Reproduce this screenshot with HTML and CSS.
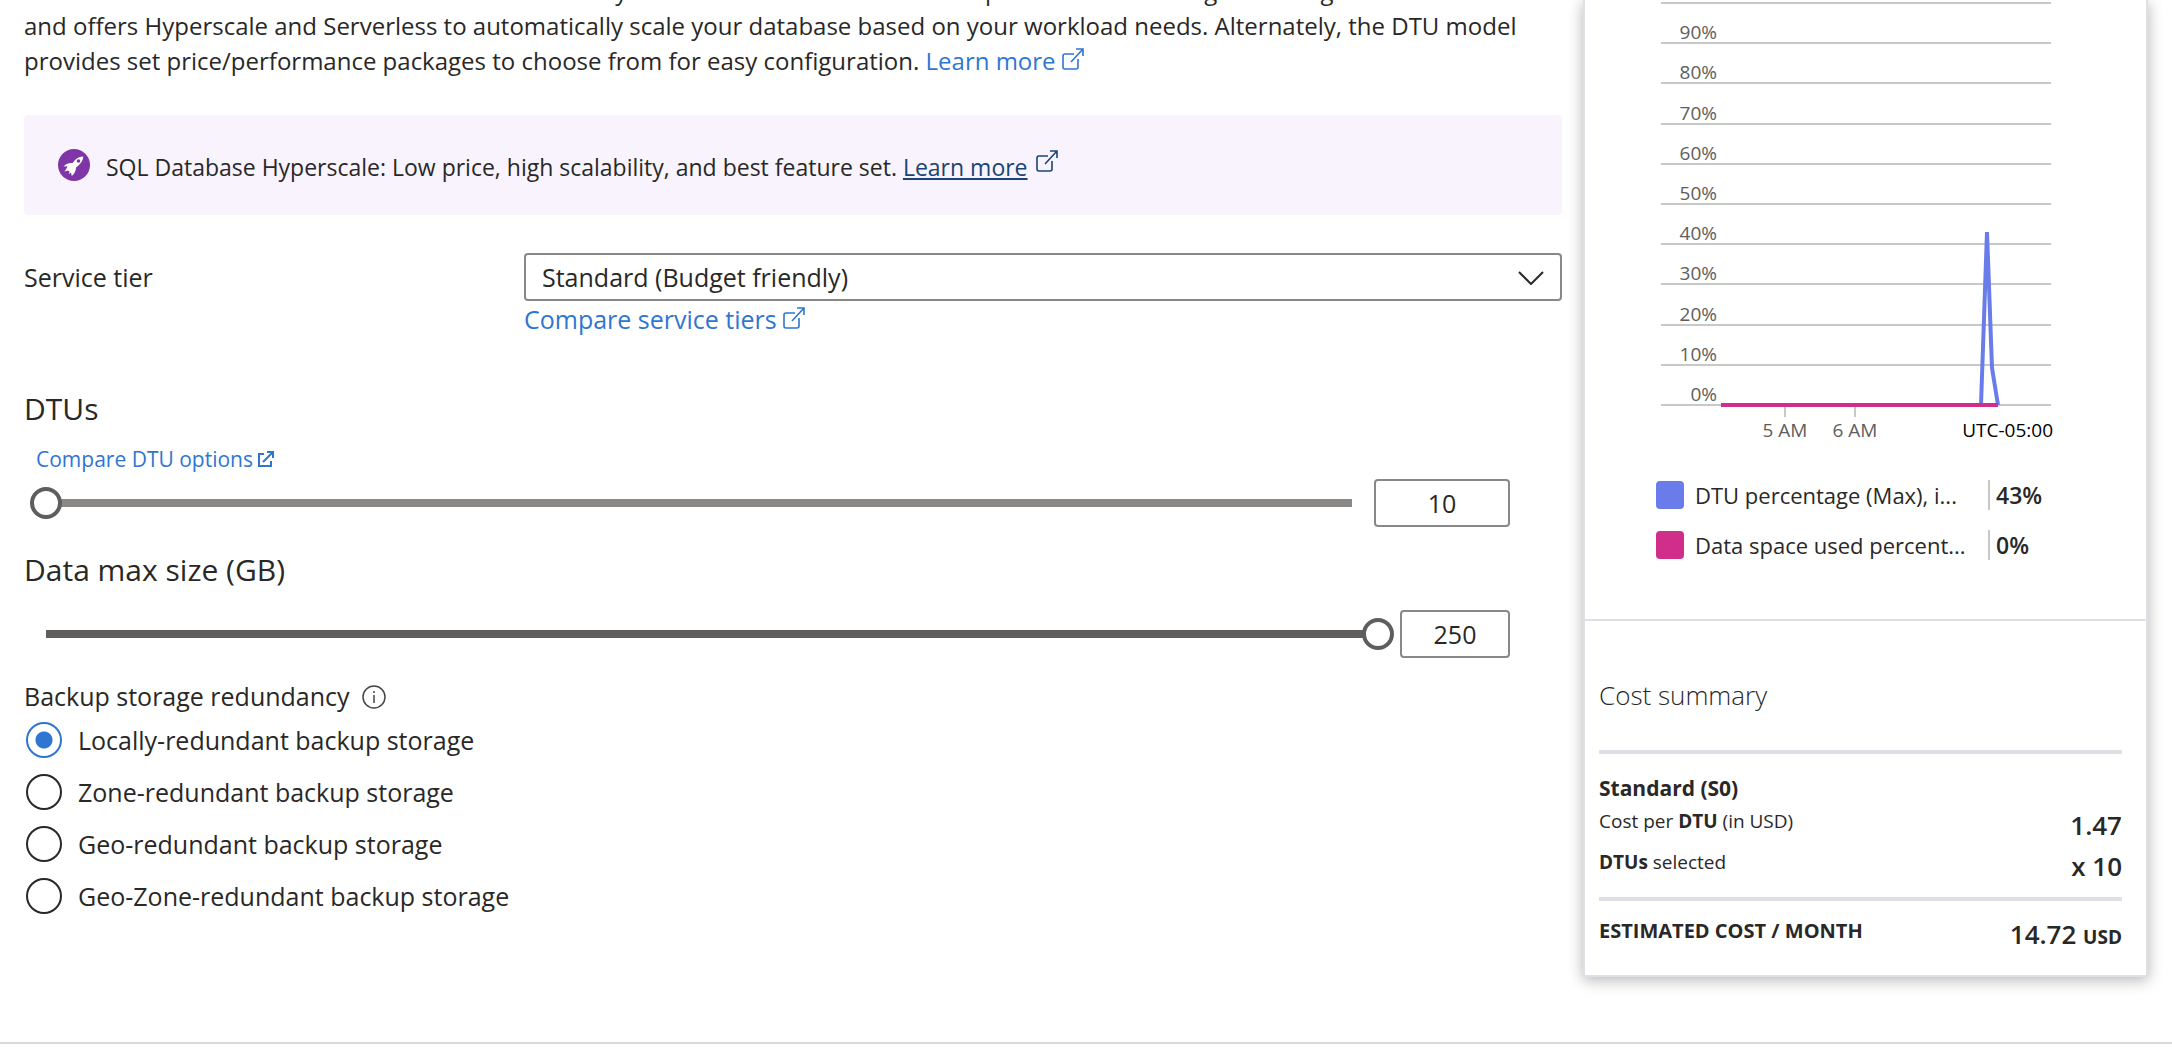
FILE: index.html
```html
<!DOCTYPE html>
<html lang="en">
<head>
    <meta charset="UTF-8">
    <meta name="viewport" content="width=device-width, initial-scale=1.0">
    <title>Configure - SQL Database</title>
    <link rel="stylesheet" href="styles.css">
</head>
<body>
    <svg class="symbols" aria-hidden="true">
        <symbol id="external" viewBox="0 0 22 22">
            <path d="M12 6H3a2 2 0 0 0-2 2v11a2 2 0 0 0 2 2h11a2 2 0 0 0 2-2v-8M9 14L21 1M14 1h7v7" fill="none" stroke="currentColor" stroke-width="1.6"/>
        </symbol>
    </svg>

    <div class="page">
        <main class="settings">
            <p class="intro">Select from the available tiers based on the needs of your workload. The vCore model provides a wide range of configuration controls and offers Hyperscale and Serverless to automatically scale your database based on your workload needs. Alternately, the DTU model provides set price/performance packages to choose from for easy configuration. <a href="#">Learn more <svg class="icon"><use href="#external"/></svg></a></p>

            <div class="banner">
                <svg class="rocket" viewBox="0 0 32 32">
                    <circle cx="16" cy="16" r="16" fill="#7f35a5"/>
                    <path d="M25.300 7.500c-3.300.2-6.300 1.500-8.500 3.800L14.500 14c-3.500-.3-6.500.7-9 3.500l4-.3-1 2.300-2 3 3.500-1 1.500 1-.5 2.500 2-1.500.8 3.500c2.500-2 4.200-5 4.200-8.500l3-2.500c2.500-2.500 4-5 4.300-8.500z" fill="#fff"/>
                    <circle cx="20.500" cy="12" r="1.800" fill="#7f35a5"/>
                </svg>
                <span>SQL Database Hyperscale: Low price, high scalability, and best feature set. <a href="#">Learn more</a></span>
                <svg class="icon"><use href="#external"/></svg>
            </div>

            <form>
                <div class="tier">
                    <label for="tier">Service tier</label>
                    <div class="tier-field">
                        <div class="dropdown">
                            <select id="tier">
                                <option>Standard (Budget friendly)</option>
                            </select>
                            <svg class="chevron" viewBox="0 0 26 14"><path d="M1 1l12 12L25 1" fill="none" stroke="#292827" stroke-width="2"/></svg>
                        </div>
                        <a href="#">Compare service tiers <svg class="icon"><use href="#external"/></svg></a>
                    </div>
                </div>

                <h2><label for="dtus">DTUs</label></h2>
                <a class="dtu-link" href="#">Compare DTU options <svg class="icon-small" viewBox="0 0 16 16"><path d="M6 3H1v12h12v-5M5 11l9-9M9 1h6v6" fill="none" stroke="currentColor" stroke-width="2"/></svg></a>
                <div class="slider-row">
                    <input type="range" id="dtus" class="slider" min="10" max="100" value="10">
                    <input type="text" class="number" value="10" aria-label="DTUs value">
                </div>

                <h2><label for="size">Data max size (GB)</label></h2>
                <div class="slider-row size-row">
                    <input type="range" id="size" class="slider filled" min="0" max="250" value="250">
                    <input type="text" class="number narrow" value="250" aria-label="Data max size value">
                </div>

                <fieldset class="redundancy">
                    <legend>Backup storage redundancy
                        <svg class="info" viewBox="0 0 24 24"><circle cx="12" cy="12" r="11" fill="none" stroke="#484644" stroke-width="1.500"/><path d="M12 10v8M12 6v2" stroke="#484644" stroke-width="1.500"/></svg>
                    </legend>
                    <label><input type="radio" name="redundancy" checked>Locally-redundant backup storage</label>
                    <label><input type="radio" name="redundancy">Zone-redundant backup storage</label>
                    <label><input type="radio" name="redundancy">Geo-redundant backup storage</label>
                    <label><input type="radio" name="redundancy">Geo-Zone-redundant backup storage</label>
                </fieldset>
            </form>
        </main>

        <aside class="panel">
            <div class="usage">
                <svg class="chart" viewBox="0 0 400 450">
                    <g stroke="#c8c8c8" stroke-width="2">
                        <path d="M5 3h390M5 43h390M5 83h390M5 124h390M5 164h390M5 204h390M5 244h390M5 284h390M5 325h390M5 365h390M5 405h390"/>
                        <path d="M129 407v10M199 407v10"/>
                    </g>
                    <g class="axis" text-anchor="end">
                        <text x="61" y="39">90%</text>
                        <text x="61" y="79">80%</text>
                        <text x="61" y="120">70%</text>
                        <text x="61" y="160">60%</text>
                        <text x="61" y="200">50%</text>
                        <text x="61" y="240">40%</text>
                        <text x="61" y="280">30%</text>
                        <text x="61" y="321">20%</text>
                        <text x="61" y="361">10%</text>
                        <text x="61" y="401">0%</text>
                    </g>
                    <g class="axis" text-anchor="middle">
                        <text x="129" y="437">5 AM</text>
                        <text x="199" y="437">6 AM</text>
                    </g>
                    <text class="axis zone" x="397" y="437" text-anchor="end">UTC-05:00</text>
                    <path d="M325 405L331 232L336 368L342 405" fill="none" stroke="#697ce9" stroke-width="4" stroke-linejoin="bevel"/>
                    <path d="M65 405h277" stroke="#d12e8b" stroke-width="4"/>
                </svg>
                <ul class="series">
                    <li><span class="swatch blue"></span><span class="name">DTU percentage (Max), i...</span><b>43%</b></li>
                    <li><span class="swatch pink"></span><span class="name">Data space used percent...</span><b>0%</b></li>
                </ul>
            </div>

            <div class="cost">
                <h3>Cost summary</h3>
                <table>
                    <tbody>
                        <tr><th colspan="2">Standard (S0)</th></tr>
                        <tr><td>Cost per <b>DTU</b> (in USD)</td><td class="amount">1.47</td></tr>
                        <tr><td><b>DTUs</b> selected</td><td class="amount">x 10</td></tr>
                    </tbody>
                    <tfoot>
                        <tr><td><b>ESTIMATED COST / MONTH</b></td><td class="amount">14.72 <small>USD</small></td></tr>
                    </tfoot>
                </table>
            </div>
        </aside>
    </div>
    <footer class="footer"></footer>
</body>
</html>
```
FILE: styles.css
```css
* {
    box-sizing: border-box;
}

body {
    margin: 0;
    background-color: #ffffff;
    color: #292827;
    font-family: "Segoe UI", "Open Sans", "Noto Sans", sans-serif;
    font-size: 25px;
    line-height: 35px;
    height: 100vh;
    overflow: hidden;
    display: flex;
    flex-direction: column;
}

a {
    color: #2f76d2;
    text-decoration: none;
}

h2, h3, p, ul {
    margin: 0;
    padding: 0;
    font-weight: 400;
}

.symbols {
    display: none;
}

.icon {
    width: 22px;
    height: 22px;
}

.icon-small {
    width: 16px;
    height: 16px;
}

.page {
    flex: 1;
    display: flex;
    align-items: flex-start;
    gap: 21px;
    padding: 0 24px;
}

.settings {
    flex: 1;
    min-width: 0;
}

/* the page is scrolled a little into the intro text */
.intro {
    margin-top: -27px;
    padding-right: 12px;
    font-size: 24px;
}

.banner {
    display: flex;
    align-items: center;
    gap: 16px;
    margin-top: 37px;
    padding: 32px 34px;
    border-radius: 4px;
    background-color: #f8f3fd;
    font-size: 23px;
}

.banner span {
    padding-top: 4px;
    line-height: 32px;
}

.banner a {
    color: #1a4475;
    text-decoration: underline;
}

.banner .icon {
    color: #1a4475;
    margin: 0 0 8px -8px;
}

.rocket {
    width: 32px;
    height: 32px;
}

.tier {
    display: flex;
    margin-top: 38px;
}

.tier > label {
    width: 500px;
    line-height: 48px;
}

.tier-field {
    flex: 1;
}

.dropdown {
    position: relative;
    margin-bottom: 1px;
}

.dropdown select {
    display: block;
    width: 100%;
    height: 48px;
    padding: 0 16px;
    appearance: none;
    border: 2px solid #8a8886;
    border-radius: 4px;
    background-color: #ffffff;
    color: inherit;
    font: inherit;
}

.chevron {
    position: absolute;
    right: 18px;
    top: 18px;
    width: 26px;
    height: 14px;
    pointer-events: none;
}

h2 {
    font-size: 30px;
    line-height: 40px;
}

.tier + h2 {
    margin-top: 52px;
}

.dtu-link {
    display: block;
    margin: 14px 12px 0;
    font-size: 21px;
    line-height: 32px;
}

.slider-row {
    display: flex;
    align-items: center;
    gap: 6px;
    margin: 4px 52px 0 6px;
}

.size-row {
    margin-top: 20px;
}

.slider-row + h2 {
    margin-top: 23px;
}

.slider {
    flex: 1;
    min-width: 0;
    height: 32px;
    margin: 0;
    appearance: none;
    background: linear-gradient(#8a8886, #8a8886) center / calc(100% - 32px) 8px no-repeat;
}

.slider.filled {
    background-image: linear-gradient(#605e5c, #605e5c);
}

.slider::-webkit-slider-thumb {
    appearance: none;
    width: 32px;
    height: 32px;
    border: 4px solid #605e5c;
    border-radius: 50%;
    background-color: #ffffff;
}

.number {
    width: 136px;
    height: 48px;
    border: 2px solid #8a8886;
    border-radius: 4px;
    color: inherit;
    font: inherit;
    text-align: center;
}

.number.narrow {
    width: 110px;
}

.redundancy {
    margin: 21px 0 0;
    padding: 0;
    border: 0;
}

.redundancy legend {
    display: flex;
    align-items: center;
    gap: 12px;
    padding: 0;
}

.info {
    width: 24px;
    height: 24px;
}

.redundancy label {
    display: flex;
    align-items: center;
    gap: 16px;
    height: 52px;
}

.redundancy input {
    appearance: none;
    width: 36px;
    height: 36px;
    margin: 0 0 0 2px;
    border: 2px solid #292827;
    border-radius: 50%;
}

.redundancy input:checked {
    border-color: #2f76d2;
    background: radial-gradient(#2f76d2 8px, transparent 9px);
}

.panel {
    width: 565px;
    border: 2px solid #dfdfe5;
    border-top: 0;
    box-shadow: 0 3px 14px rgba(0, 0, 0, 0.3);
}

.usage {
    height: 621px;
    padding: 0 71px;
    border-bottom: 2px solid #dfdfe5;
}

.chart {
    display: block;
    width: 400px;
    height: 450px;
}

.axis {
    fill: #605e5c;
    font-size: 19px;
}

.zone {
    fill: #000000;
}

.series {
    list-style: none;
    margin-top: 20px;
}

.series li {
    display: flex;
    align-items: center;
    height: 50px;
    font-size: 23px;
}

.swatch {
    width: 28px;
    height: 28px;
    border-radius: 4px;
}

.blue {
    background-color: #697ce9;
}

.pink {
    background-color: #d12e8b;
}

.name {
    width: 304px;
    padding-left: 11px;
    font-size: 22px;
    white-space: nowrap;
}

.series b {
    padding-left: 6px;
    border-left: 2px solid #c8c8c8;
    font-weight: 600;
    line-height: 30px;
}

.cost {
    padding: 56px 24px 17px 14px;
    font-size: 19px;
}

.cost h3 {
    height: 77px;
    border-bottom: 4px solid #dfdfe5;
    font-size: 26px;
    font-weight: 300;
    line-height: 36px;
}

.cost table {
    width: 100%;
    border-collapse: collapse;
    margin-top: 17px;
}

.cost th {
    padding: 0;
    font-size: 21px;
    line-height: 34px;
    text-align: left;
}

.cost td {
    height: 41px;
    padding: 0;
    line-height: 33px;
    vertical-align: top;
}

.cost tbody tr:last-child td {
    height: 53px;
}

.cost .amount {
    font-size: 26px;
    font-weight: 600;
    line-height: 41px;
    text-align: right;
}

.cost small {
    font-size: 19px;
    font-weight: 700;
}

.cost tfoot {
    border-top: 4px solid #dfdfe5;
}

.cost tfoot td {
    padding-top: 13px;
    font-size: 20px;
}

.footer {
    height: 8px;
    border-top: 2px solid #d8d8d8;
}
```
